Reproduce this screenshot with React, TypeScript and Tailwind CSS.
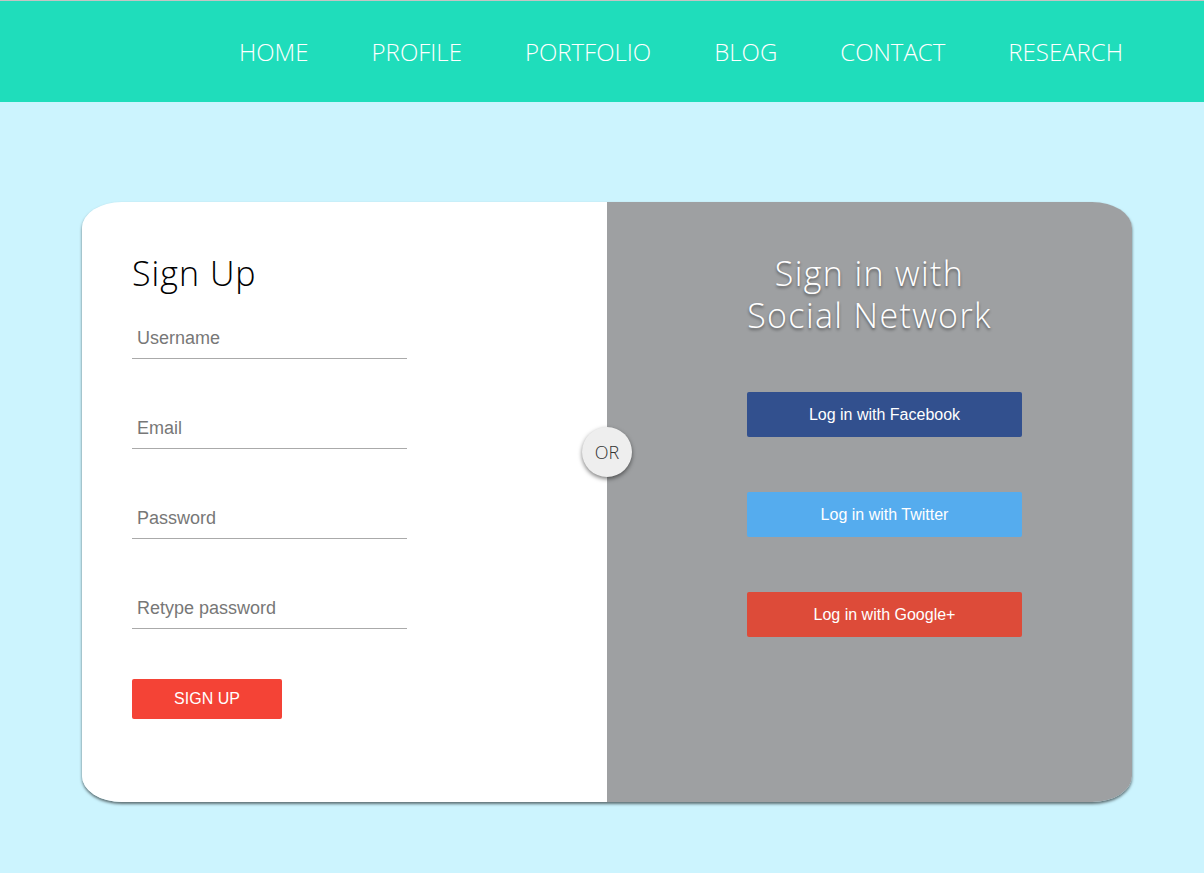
const navItems = ["HOME", "PROFILE", "PORTFOLIO", "BLOG", "CONTACT", "RESEARCH"];

const fields = ["Username", "Email", "Password", "Retype password"];

const socials = [
  { label: "Log in with Facebook", color: "bg-[#32508e]" },
  { label: "Log in with Twitter", color: "bg-[#55acee]" },
  { label: "Log in with Google+", color: "bg-[#dd4b39]" },
];

export default function App() {
  return (
    <div className="min-h-[873px] bg-[#ccf4fe] font-['Liberation_Sans',Arial,sans-serif]">
      <header className="h-[102px] border-t border-[#c4c4c4] bg-[#1fddbb]">
        <nav className="flex h-full items-center justify-end gap-[63px] pr-[81px] font-['Open_Sans',sans-serif] text-[24px] font-light text-white">
          {navItems.map((item) => (
            <a key={item} href="#" className="leading-none">
              {item}
            </a>
          ))}
        </nav>
      </header>

      <main className="pt-[100px] pl-[82px]">
        <div className="relative flex h-[600px] w-[1050px] rounded-tl-[40px_26px] rounded-tr-[40px_26px] rounded-br-[40px_26px] rounded-bl-[40px_26px] shadow-[0_2px_3px_rgba(0,0,0,0.55)]">
          <section className="w-[525px] rounded-tl-[40px_26px] rounded-bl-[40px_26px] bg-white pt-[51px] pl-[50px]">
            <h2 className="font-['Open_Sans',sans-serif] text-[34px] font-light leading-[40px] tracking-[0.03em] text-black">
              Sign Up
            </h2>
            <form className="mt-[26px] flex w-[275px] flex-col gap-[50px]">
              {fields.map((f) => (
                <input
                  key={f}
                  type={f.includes("assword") ? "password" : "text"}
                  placeholder={f}
                  className="h-[40px] border-b border-[#aaa] pl-[5px] text-[18px] text-[#333] outline-none placeholder:text-[#777]"
                />
              ))}
              <button
                type="button"
                className="h-[40px] w-[150px] rounded-[2px] bg-[#f44336] text-[16px] text-white"
              >
                SIGN UP
              </button>
            </form>
          </section>

          <section className="w-[525px] rounded-tr-[40px_26px] rounded-br-[40px_26px] bg-[#9ea0a2] pt-[50px]">
            <h2 className="text-center font-['Open_Sans',sans-serif] text-[34px] font-light leading-[42px] tracking-[0.04em] text-white [text-shadow:0_2px_3px_rgba(0,0,0,0.45)]">
              Sign in with
              <br />
              Social Network
            </h2>
            <div className="mt-[56px] ml-[140px] flex flex-col gap-[55px]">
              {socials.map((s) => (
                <button
                  key={s.label}
                  type="button"
                  className={`h-[45px] w-[275px] rounded-[2px] text-[16px] text-white ${s.color}`}
                >
                  {s.label}
                </button>
              ))}
            </div>
          </section>

          <div className="absolute top-[225px] left-[500px] flex h-[50px] w-[50px] items-center justify-center rounded-full bg-[#eee] font-['Open_Sans',sans-serif] text-[18px] font-light text-[#333] shadow-[0_2px_4px_rgba(0,0,0,0.5)]">
            OR
          </div>
        </div>
      </main>
    </div>
  );
}
